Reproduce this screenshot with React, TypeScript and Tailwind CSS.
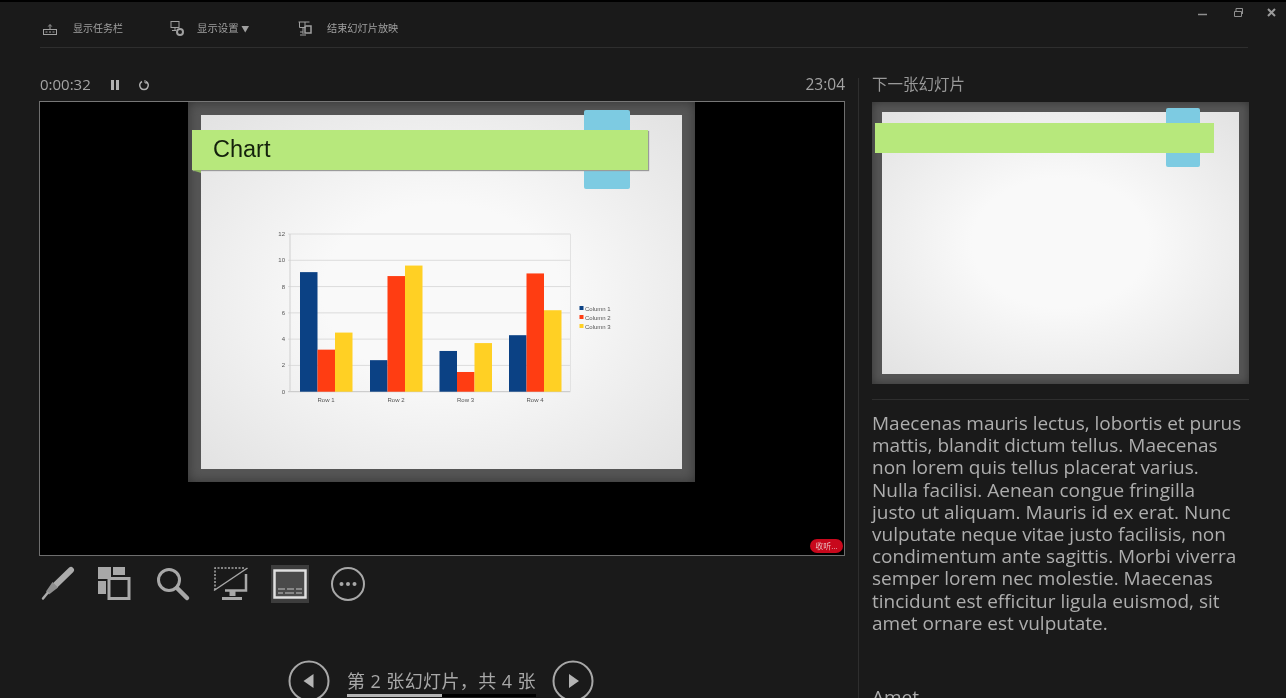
const notes = [
  'Maecenas mauris lectus, lobortis et purus',
  'mattis, blandit dictum tellus. Maecenas',
  'non lorem quis tellus placerat varius.',
  'Nulla facilisi. Aenean congue fringilla',
  'justo ut aliquam. Mauris id ex erat. Nunc',
  'vulputate neque vitae justo facilisis, non',
  'condimentum ante sagittis. Morbi viverra',
  'semper lorem nec molestie. Maecenas',
  'tincidunt est efficitur ligula euismod, sit',
  'amet ornare est vulputate.',
];

const gridLines = [0, 2, 4, 6, 8, 10, 12];

const rows = [
  { label: 'Row 1', x: 300, values: [9.1, 3.2, 4.5] },
  { label: 'Row 2', x: 370, values: [2.4, 8.8, 9.6] },
  { label: 'Row 3', x: 439.5, values: [3.1, 1.5, 3.7] },
  { label: 'Row 4', x: 509, values: [4.3, 9, 6.2] },
];

const barColors = ['#0b4184', '#ff3d12', '#ffd024'];

function yOf(v: number) {
  return 391.7 - v * 13.14;
}

function Chart() {
  return (
    <svg width="370" height="190" viewBox="260 220 370 190" className="block">
      {gridLines.map((v) => (
        <g key={v}>
          <line x1="288" x2="570.5" y1={yOf(v)} y2={yOf(v)} stroke={v === 0 ? '#c4c4c4' : '#dcdcdc'} strokeWidth="1" />
          <text x="285" y={yOf(v) + 2} textAnchor="end" fontSize="6" fill="#555" fontFamily="Liberation Sans, sans-serif">
            {v}
          </text>
        </g>
      ))}
      <line x1="290" x2="290" y1="234" y2="392" stroke="#cfcfcf" />
      <line x1="570.5" x2="570.5" y1="234" y2="392" stroke="#e2e2e2" />
      {rows.map((row) => (
        <g key={row.label}>
          {row.values.map((v, i) => (
            <rect key={i} x={row.x + i * 17.5} y={yOf(v)} width="17.5" height={v * 13.14} fill={barColors[i]} />
          ))}
          <text x={row.x + 26} y="402" textAnchor="middle" fontSize="6" fill="#555" fontFamily="Liberation Sans, sans-serif">
            {row.label}
          </text>
        </g>
      ))}
      {['Column 1', 'Column 2', 'Column 3'].map((c, i) => (
        <g key={c}>
          <rect x="579.5" y={306 + i * 9} width="4" height="4" fill={barColors[i]} />
          <text x="585" y={310.5 + i * 9} fontSize="6" fill="#555" fontFamily="Liberation Sans, sans-serif">
            {c}
          </text>
        </g>
      ))}
    </svg>
  );
}

function TaskbarIcon() {
  return (
    <svg width="16" height="16" viewBox="0 0 16 16" fill="none" stroke="#a0a0a0" className="block">
      <rect x="1.5" y="8.5" width="13" height="5" />
      <path d="M8 4.500v4M6.300 5.500 8 3.500 9.700 5.500" />
      <path d="M3.500 11h2M7 11h2M10.500 11h2" />
    </svg>
  );
}

function DisplaySettingsIcon() {
  return (
    <svg width="16" height="17" viewBox="0 0 16 17" fill="none" stroke="#a0a0a0" className="block">
      <rect x="2" y="1.5" width="8" height="6" />
      <path d="M6 7.500v3M3 10.500h4" />
      <circle cx="11" cy="12" r="3" strokeWidth="2" />
    </svg>
  );
}

function EndShowIcon() {
  return (
    <svg width="16" height="17" viewBox="0 0 16 17" fill="none" stroke="#a0a0a0" className="block">
      <path d="M1.500 2h11M2.500 2v5.500h6M8 2v3" />
      <rect x="8" y="6" width="6" height="7" strokeWidth="1.500" />
      <path d="M6 8v6M3 15h6M6 12H3" />
    </svg>
  );
}

function PenIcon({ className }: { className: string }) {
  return (
    <svg width="36" height="36" viewBox="0 0 36 36" fill="none" className={className}>
      <path d="M31 4 15 19.500" stroke="#ababab" strokeWidth="6" strokeLinecap="round" />
      <path d="M12.500 16 18 21.500 9 28.500 6 25.500Z" fill="#8e8e8e" />
      <path d="M7.500 27 3 32.500" stroke="#ababab" strokeWidth="2.500" strokeLinecap="round" />
    </svg>
  );
}

function LayoutIcon({ className }: { className: string }) {
  return (
    <svg width="36" height="36" viewBox="0 0 36 36" fill="none" className={className}>
      <rect x="2" y="1" width="13" height="12" fill="#a8a8a8" />
      <rect x="17" y="1" width="12" height="8" fill="#a8a8a8" />
      <rect x="2" y="15" width="8" height="13" fill="#a8a8a8" />
      <rect x="13" y="12.500" width="20" height="20" stroke="#a8a8a8" strokeWidth="3" fill="#1a1a1a" />
    </svg>
  );
}

function SearchIcon({ className }: { className: string }) {
  return (
    <svg width="36" height="36" viewBox="0 0 36 36" fill="none" className={className}>
      <circle cx="14" cy="14" r="10.500" stroke="#a8a8a8" strokeWidth="3" />
      <path d="M22 22 32 32" stroke="#a8a8a8" strokeWidth="4.500" strokeLinecap="round" />
    </svg>
  );
}

function ScreenIcon({ className }: { className: string }) {
  return (
    <svg width="36" height="36" viewBox="0 0 36 36" fill="none" className={className}>
      <path d="M2 24V2h30" stroke="#a8a8a8" strokeWidth="1.500" strokeDasharray="2 1.500" />
      <path d="M1 24.500 34.500 2" stroke="#a8a8a8" strokeWidth="1.500" />
      <path d="M33 8v16.500H12" stroke="#a8a8a8" strokeWidth="2.500" />
      <path d="M16.500 25h6v5h-6ZM9 31h20v3H9Z" fill="#a8a8a8" />
    </svg>
  );
}

function SubtitleIcon({ className }: { className: string }) {
  return (
    <div className={`w-[38px] h-[38px] bg-[#3d3d3d] flex items-center justify-center ${className}`}>
      <svg width="34" height="32" viewBox="0 0 34 32" fill="none">
        <rect x="1.500" y="2.500" width="31" height="27" fill="#4a4a4a" stroke="#e0e0e0" strokeWidth="2.500" />
        <path d="M5 21h7M14 21h7M23 21h6M5 25h5M12 25h9M23 25h6" stroke="#c4c4c4" strokeWidth="1" />
      </svg>
    </div>
  );
}

function MoreIcon({ className }: { className: string }) {
  return (
    <svg width="36" height="36" viewBox="0 0 36 36" fill="none" className={className}>
      <circle cx="18" cy="18" r="16" stroke="#a8a8a8" strokeWidth="2" />
      <circle cx="11.500" cy="18" r="2" fill="#a8a8a8" />
      <circle cx="18" cy="18" r="2" fill="#a8a8a8" />
      <circle cx="24.500" cy="18" r="2" fill="#a8a8a8" />
    </svg>
  );
}

function NavButton({ dir, className }: { dir: 'prev' | 'next'; className?: string }) {
  return (
    <svg width="42" height="42" viewBox="0 0 42 42" fill="none" className={`block shrink-0 ${className ?? ''}`}>
      <circle cx="21" cy="21" r="19.500" stroke="#a8a8a8" strokeWidth="2" />
      <path d={dir === 'prev' ? 'M15.500 21 25.500 14v14Z' : 'M27 21 17 14v14Z'} fill="#b4b4b4" />
    </svg>
  );
}

export default function App() {
  return (
    <div
      className="relative w-[1286px] h-[698px] overflow-hidden bg-[#1a1a1a] border-t-2 border-black text-[#a3a3a3] blur-[0.4px]"
      style={{ fontFamily: '"Open Sans", "Noto Sans CJK SC", sans-serif' }}
    >
      {/* window controls */}
      <div className="absolute top-[5px] left-[1197px] flex items-center">
        <svg width="11" height="11" viewBox="0 0 11 11" stroke="#8f8f8f" fill="none"><path d="M1 7.500h9" strokeWidth="1.500" /></svg>
        <svg width="11" height="11" viewBox="0 0 11 11" stroke="#8f8f8f" fill="none" className="ml-[25px]"><path d="M1.500 4.500h7v5h-7ZM3 4V1.500h6.500V7" /></svg>
        <svg width="11" height="11" viewBox="0 0 11 11" stroke="#9a9a9a" fill="none" className="ml-[22px]"><path d="M2 2l7 7M9 2l-7 7" strokeWidth="2" /></svg>
      </div>

      {/* top toolbar */}
      <div className="ml-10 w-[1208px] h-[46px] border-b border-[#2e2e2e] flex items-center text-[10px] text-[#a0a0a0] pt-[8px]">
        <div className="flex items-center w-[129px] pl-[2px]">
          <TaskbarIcon />
          <span className="ml-[15px]">显示任务栏</span>
        </div>
        <div className="flex items-center w-[128px]">
          <DisplaySettingsIcon />
          <span className="ml-[12px] text-[10.400px]">显示设置 <span className="text-[8px]">▼</span></span>
        </div>
        <div className="flex items-center">
          <EndShowIcon />
          <span className="ml-[14px] text-[10.200px]">结束幻灯片放映</span>
        </div>
      </div>

      <div className="flex pt-[30px]">
        {/* left column */}
        <div className="w-[858px] pl-[39px] pr-[13px]">
          <div className="h-[23px] flex items-center text-[15px] pb-[10px]">
            <span className="ml-px">0:00:32</span>
            <svg width="10" height="12" viewBox="0 0 10 12" fill="#b0b0b0" className="ml-[19px]"><path d="M1 1h3v10H1ZM6 1h3v10H6Z" /></svg>
            <svg width="12" height="12" viewBox="0 0 12 12" fill="none" stroke="#b0b0b0" strokeWidth="1.500" className="ml-[18px]">
              <path d="M4 2.500a4.300 4.300 0 1 0 4 0" />
              <path d="M7 1v3h2.500" strokeWidth="1" />
            </svg>
            <span className="ml-auto text-[15.500px]">23:04</span>
          </div>

          {/* current slide */}
          <div className="relative w-[806px] h-[455px] border border-[#6e6e6e] border-t-[#777] bg-black">
            <div className="ml-[148px] w-[507px] h-[380px] p-[13px] bg-[#565656] shadow-[inset_0_0_12px_#333]">
              <div className="relative w-[481px] h-[354px] bg-[radial-gradient(ellipse_at_center,#f9f9f9_35%,#e2e2e2_100%)]">
                <div className="absolute left-[383px] top-[-5px] w-[46px] h-[79px] bg-[#7dcbe2] rounded-[2px]"></div>
                <div className="absolute left-[-9px] top-[15px] w-[456px] h-[40px] bg-[#b7e87c] flex items-center pl-[21px] text-[23.500px] text-[#14210c] shadow-[1px_1px_1px_#9a9a9a]" style={{ fontFamily: '"Liberation Sans", sans-serif' }}>
                  Chart
                </div>
                <div className="absolute left-[-9px] top-[55px] w-[9px] h-[3px] bg-[#8fb85f] [clip-path:polygon(0_0,100%_0,100%_100%)]"></div>
                <div className="pl-[59px] pt-[105px]">
                  <Chart />
                </div>
              </div>
            </div>
            <div className="absolute left-[770px] top-[437px] w-[33px] h-[14px] rounded-full bg-[#c8081c] text-[8px] leading-[14px] text-center text-[#e8b8bc]">
              收听...
            </div>
          </div>

          {/* tools */}
          <div className="mt-[9px] h-[38px] flex items-center">
            <PenIcon className="ml-px" />
            <LayoutIcon className="ml-[20px]" />
            <SearchIcon className="ml-[23px]" />
            <ScreenIcon className="ml-[22px]" />
            <SubtitleIcon className="ml-[22px]" />
            <MoreIcon className="ml-[21px]" />
          </div>

          {/* slide navigation */}
          <div className="mt-[57px] ml-[249px] flex items-start">
            <NavButton dir="prev" />
            <div className="ml-[17px] w-[189px] h-[37px] flex flex-col">
              <div className="h-[34px] pt-[8px] text-[18px] tracking-[0.4px] leading-[26px] text-[#a8a8a8] whitespace-nowrap">第 2 张幻灯片，共 4 张</div>
              <div className="h-[3px] bg-black">
                <div className="w-[95px] h-full bg-[#b4b4b4]"></div>
              </div>
            </div>
            <NavButton dir="next" className="ml-[16px]" />
          </div>
        </div>

        {/* right column */}
        <div className="w-[428px] h-[620px] border-l border-[#2e2e2e] pl-[13px]">
          <div className="h-[24px] -mt-[2px] mb-[2px] text-[15.500px] leading-[16px] text-[#999]">下一张幻灯片</div>
          <div className="w-[377px] h-[282px] p-[10px] bg-[#565656] shadow-[inset_0_0_10px_#333]">
            <div className="relative w-[357px] h-[262px] bg-[radial-gradient(ellipse_at_center,#f9f9f9_35%,#e2e2e2_100%)]">
              <div className="absolute left-[284px] top-[-4px] w-[34px] h-[59px] bg-[#7dcbe2] rounded-[2px]"></div>
              <div className="absolute left-[-7px] top-[11px] w-[339px] h-[30px] bg-[#b7e87c]"></div>
            </div>
          </div>
          <div className="mt-[15px] w-[377px] h-px bg-[#2e2e2e]"></div>
          <div className="mt-[12px] text-[19px] leading-[22.2px] text-[#adadad] whitespace-nowrap">
            {notes.map((line) => (
              <div key={line}>{line}</div>
            ))}
            <div className="mt-[52px]">Amet</div>
          </div>
        </div>
      </div>
    </div>
  );
}
